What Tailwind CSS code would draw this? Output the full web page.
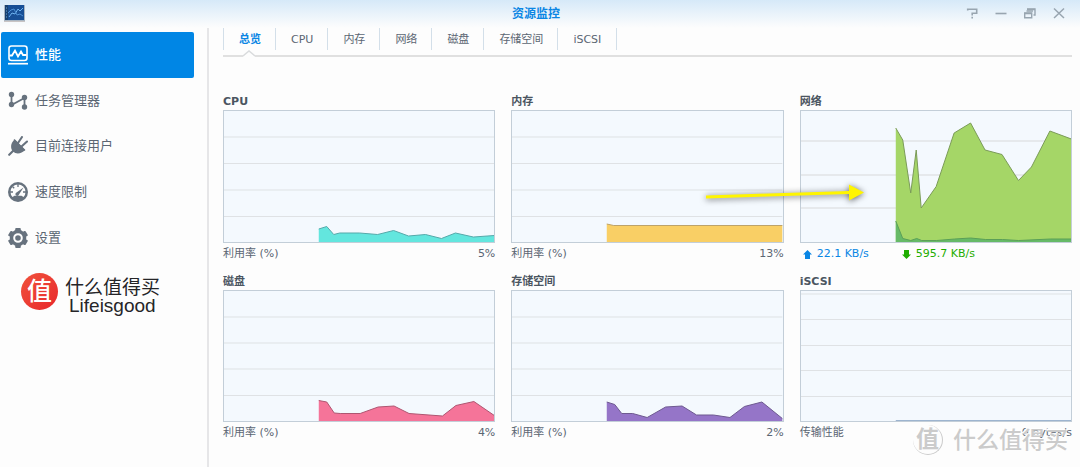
<!DOCTYPE html>
<html lang="zh-CN">
<head>
<meta charset="utf-8">
<title>资源监控</title>
<script src="https://cdn.jsdelivr.net/npm/@tailwindcss/browser@4"></script>
</head>
<body class="relative flex min-h-screen flex-col overflow-x-hidden bg-[#fdfdfd] font-['DejaVu_Sans','Noto_Sans_CJK_SC',sans-serif] text-[11px] leading-4 text-[#5b6673]">

<header class="grid h-7 grid-cols-[1fr_auto_1fr] items-center bg-linear-to-b from-[#d6e9f8] to-[#fdfdfd] pr-3 pl-1">
  <svg class="h-[19px] w-[22px]" viewBox="0 0 22 19" aria-hidden="true">
    <rect x="0" y="0" width="21" height="16" fill="#a9b6c3"/>
    <rect x="1" y="0" width="19" height="15" fill="#174f96"/>
    <path d="M1 0h3v15H1z" fill="#17406f"/>
    <path d="M2 3h1M2 6h1M2 9h1M2 12h1" stroke="#6fa5d8"/>
    <path d="M5 12l3-4 3 1 3-5 2 2 3-3" fill="none" stroke="#6fb4f0"/>
    <path d="M4 8l3-3 3-1 3 6 3-1 3 2" fill="none" stroke="#4d90d6"/>
    <path d="M0 16.500h21" stroke="#c9c4c4"/>
  </svg>
  <h1 class="text-[12px] font-bold text-[#0a86e4]">资源监控</h1>
  <div class="flex justify-end gap-[13px] pb-[3px] text-[#98a5b0]">
    <button type="button" aria-label="帮助" class="h-4 w-4"><svg viewBox="0 0 16 16" fill="none" stroke="currentColor" stroke-width="1.6"><path d="M2.700 5.500V4.200h9v4H7.200v2.300M7.200 11.800v1.700"/></svg></button>
    <button type="button" aria-label="最小化" class="h-4 w-4"><svg viewBox="0 0 16 16" fill="none" stroke="currentColor" stroke-width="1.6"><path d="M1.500 8.500h11"/></svg></button>
    <button type="button" aria-label="还原" class="h-4 w-4"><svg viewBox="0 0 16 16" fill="none" stroke="currentColor" stroke-width="1.4"><path d="M4 4h8v6h-1.500M3.500 6h6.500M1.700 8h7v4.800h-7z"/><path d="M4 4.500h8M1.500 8.500h7.500" stroke-width="1.500"/></svg></button>
    <button type="button" aria-label="关闭" class="h-4 w-4"><svg viewBox="0 0 16 16" fill="none" stroke="currentColor" stroke-width="1.5"><path d="M2 3.500l10 9.500M12 3.500l-10 9.500"/></svg></button>
  </div>
</header>

<div class="flex flex-1">
  <aside class="w-[209px] shrink-0 border-r-2 border-[#e6e6e8] pt-1">
    <nav class="mr-[13px] ml-px grid h-[228px] grid-rows-5 text-[13px]">
      <a href="#performance" aria-current="page" class="flex items-center gap-[7px] rounded-xs bg-[#0086e5] pt-px pl-[7px] text-white">
        <svg class="h-5 w-5" viewBox="0 0 20 20" fill="none" stroke="currentColor" aria-hidden="true"><rect x="1" y="1" width="18" height="14.500" rx="2.500" stroke-width="1.600"/><path d="M1.500 10.500h2.500l3-5 3 6 3-5 2 3.500h3.500" stroke-width="1.800"/><path d="M0 18.700h20" stroke-width="1.700"/></svg>
        <span class="font-medium">性能</span></a>
      <a href="#tasks" class="flex items-center gap-[7px] pt-px pl-[7px]">
        <svg class="h-5 w-5" viewBox="0 0 20 20" fill="#67727e" stroke="#67727e" aria-hidden="true"><path d="M3.500 4v10l13-7v10" fill="none" stroke-width="1.800"/><g stroke="none"><circle cx="3.500" cy="3.500" r="2.700"/><circle cx="3.500" cy="13.500" r="2.700"/><circle cx="16.500" cy="6.500" r="2.700"/><circle cx="16.500" cy="16" r="2.700"/></g></svg>
        <span>任务管理器</span></a>
      <a href="#users" class="flex items-center gap-[7px] pt-px pl-[7px]">
        <svg class="h-5 w-5" viewBox="0 0 20 20" fill="#67727e" stroke="#67727e" stroke-linecap="round" aria-hidden="true"><path d="M6.500 3.500l10.500 10.500c-3.500 4-9 4.500-12 1.500S2.500 7 6.500 3.500z" stroke="none"/><path d="M10 7l4-6M13.500 10.500l5.500-5M1.200 18.800l4-4" stroke-width="2.100"/><path d="M6.500 4l10 10" stroke-width="1.600"/></svg>
        <span>目前连接用户</span></a>
      <a href="#speed" class="flex items-center gap-[7px] pt-px pl-[7px]">
        <svg class="h-5 w-5" viewBox="0 0 20 20" aria-hidden="true"><circle cx="10" cy="10" r="10" fill="#67727e"/><path d="M4.500 15a7.500 7.500 0 1 1 11 0l-2-1.200h-7z" fill="#fdfdfd"/><path d="M10 2v3M4.500 4.500l1.700 1.800M2 10h3M15 10h3" stroke="#67727e" stroke-width="1.300"/><path d="M15.500 5.500l-4.500 7a1.800 1.800 0 1 1-2.500-2z" fill="#67727e"/></svg>
        <span>速度限制</span></a>
      <a href="#settings" class="flex items-center gap-[7px] pt-px pl-[7px]">
        <svg class="h-5 w-5" viewBox="0 0 20 20" aria-hidden="true"><g fill="#67727e"><circle cx="10" cy="10" r="8.300"/><rect x="7.200" y="0" width="5.600" height="20" rx="1"/><rect x="7.200" y="0" width="5.600" height="20" rx="1" transform="rotate(60 10 10)"/><rect x="7.200" y="0" width="5.600" height="20" rx="1" transform="rotate(120 10 10)"/></g><circle cx="10" cy="10" r="3.800" fill="none" stroke="#fdfdfd" stroke-width="2"/></svg>
        <span>设置</span></a>
    </nav>
    <div class="mt-2 flex items-center gap-[7px] pl-[21px] text-[#252528]">
      <span class="flex h-[37px] w-[37px] items-center justify-center rounded-full bg-linear-to-br from-[#f0503c] to-[#e8252b] text-[25px] leading-none font-medium text-white">值</span>
      <div class="flex flex-col pt-[9px]">
        <span class="text-[19px] leading-5">什么值得买</span>
        <span class="pl-1 font-['Liberation_Sans',sans-serif] text-[19px] leading-[18px]">Lifeisgood</span>
      </div>
    </div>
  </aside>

  <main class="min-w-0 flex-1 pr-2 pl-[14px]">
    <div class="relative h-[29px] border-b-2 border-[#e0e0e0]">
      <div role="tablist" class="flex h-[22px] border-l border-[#d3dfe9]">
        <button type="button" role="tab" aria-selected="true" class="border-r border-[#d3dfe9] pt-px pr-[14px] pl-[15px] font-bold text-[#0a86e4]">总览</button>
        <button type="button" role="tab" class="border-r border-[#d3dfe9] pt-px pr-[14px] pl-[15px]">CPU</button>
        <button type="button" role="tab" class="border-r border-[#d3dfe9] pt-px pr-[14px] pl-[15px]">内存</button>
        <button type="button" role="tab" class="border-r border-[#d3dfe9] pt-px pr-[14px] pl-[15px]">网络</button>
        <button type="button" role="tab" class="border-r border-[#d3dfe9] pt-px pr-[14px] pl-[15px]">磁盘</button>
        <button type="button" role="tab" class="border-r border-[#d3dfe9] pt-px pr-[14px] pl-[15px]">存储空间</button>
        <button type="button" role="tab" class="border-r border-[#d3dfe9] px-[15px] pt-px">iSCSI</button>
      </div>
      <svg class="absolute -bottom-[2px] left-5 h-[7px] w-3" viewBox="0 0 12 7" aria-hidden="true"><path d="M0 6.500L6 .8l6 5.700V7H0z" fill="#fdfdfd"/><path d="M0 6L6 1l6 5" fill="none" stroke="#d9dbdd" stroke-width="1.400"/></svg>
    </div>

    <div class="grid grid-cols-3 gap-x-4 gap-y-3 pt-[37px]">
      <section>
        <h2 class="font-bold text-[#4b5561]">CPU</h2>
        <svg class="h-[133px] w-full border border-[#c3ced8] bg-[#f4f9fe]" viewBox="0 0 271 131" preserveAspectRatio="none" role="img" aria-label="CPU">
          <path d="M0 26h271M0 52.500h271M0 79h271M0 105.500h271" stroke="#dfe2e5"/>
          <path d="M95 131V118l8-2.500 7 8 6-1.500h20l18 1.500 16-4 15 5.500 17-1.500 16 4 14-5.500 18 4 21-1.500V131z" fill="#63e6de"/>
          <path d="M95 118l8-2.500 7 8 6-1.500h20l18 1.500 16-4 15 5.500 17-1.500 16 4 14-5.500 18 4 21-1.500" fill="none" stroke="#55a9aa"/>
        </svg>
        <p class="mt-[3px] flex justify-between"><span>利用率 (%)</span><span>5%</span></p>
      </section>

      <section>
        <h2 class="font-bold text-[#4b5561]">内存</h2>
        <svg class="h-[133px] w-full border border-[#c3ced8] bg-[#f4f9fe]" viewBox="0 0 271 131" preserveAspectRatio="none" role="img" aria-label="内存">
          <path d="M0 26h271M0 52.500h271M0 79h271M0 105.500h271" stroke="#dfe2e5"/>
          <path d="M95 131V113l7 1.500h169V131z" fill="#f9cf65"/>
          <path d="M95 113l7 1.500h169" fill="none" stroke="#bda369"/>
        </svg>
        <p class="mt-[3px] flex justify-between"><span>利用率 (%)</span><span>13%</span></p>
      </section>

      <section>
        <h2 class="font-bold text-[#4b5561]">网络</h2>
        <div class="relative">
          <svg class="h-[133px] w-full border border-[#c3ced8] bg-[#f4f9fe]" viewBox="0 0 271 131" preserveAspectRatio="none" role="img" aria-label="网络">
            <path d="M0 30h271M0 64h271M0 97h271" stroke="#e1e4e6" stroke-width="1.500"/>
            <path d="M95 131V17l7 12 8 53 5.500-43 5 58 15-21.500 18-53.500 16.500-10 14.500 27 17 4.500 16.500 26L231 56l18.500-36 21.500 8V131z" fill="#a5d667"/>
            <path d="M95 17l7 12 8 53 5.500-43 5 58 15-21.500 18-53.500 16.500-10 14.500 27 17 4.500 16.500 26L231 56l18.500-36 21.500 8" fill="none" stroke="#7a9b58"/>
            <path d="M95 131V110l7 17.500 8 2 6-2 5 2h15l18-1.500 16-1 15 1.500h17l16 1 32-1.500h21V131z" fill="#66ba67"/>
            <path d="M95 110l7 17.500 8 2 6-2 5 2h15l18-1.500 16-1 15 1.500h17l16 1 32-1.500h21" fill="none" stroke="#5a9f57"/>
          </svg>
          <svg class="pointer-events-none absolute top-[71px] -left-[98px] h-7 w-[168px] drop-shadow-[0_1px_3px_rgb(0_0_0/0.65)]" viewBox="0 0 168 28" aria-hidden="true"><path d="M4 14.500L147 10V3.500L162 11.500 147 19.500V13L4 17.500z" fill="#fff500"/></svg>
        </div>
        <p class="mt-[3px] flex gap-[33px] pl-[3px]">
          <span class="flex items-center gap-[5px] text-[#0a86e4]"><svg class="h-[9px] w-[9px]" viewBox="0 0 9 9" fill="currentColor" aria-hidden="true"><path d="M4.500 0L9 4.500H7V9H2V4.500H0z"/></svg>22.1 KB/s</span>
          <span class="flex items-center gap-[5px] text-[#1fad00]"><svg class="h-[9px] w-[9px]" viewBox="0 0 9 9" fill="currentColor" aria-hidden="true"><path d="M4.500 9L9 4.500H7V0H2v4.500H0z"/></svg>595.7 KB/s</span>
        </p>
      </section>

      <section>
        <h2 class="font-bold text-[#4b5561]">磁盘</h2>
        <svg class="h-[132px] w-full border border-[#c3ced8] bg-[#f4f9fe]" viewBox="0 0 271 130" preserveAspectRatio="none" role="img" aria-label="磁盘">
          <path d="M0 26h271M0 52h271M0 78h271M0 104.500h271" stroke="#dfe2e5"/>
          <path d="M95 130V109.500l8 1.500 7.500 11 6 .5h20l18-6.500 16-1 15 7.500 33.500 2.500 13.500-10.500 18-4 20.500 14V130z" fill="#f57499"/>
          <path d="M95 109.500l8 1.500 7.500 11 6 .5h20l18-6.500 16-1 15 7.500 33.500 2.500 13.500-10.500 18-4 20.500 14" fill="none" stroke="#ae5570"/>
        </svg>
        <p class="mt-[3px] flex justify-between"><span>利用率 (%)</span><span>4%</span></p>
      </section>

      <section>
        <h2 class="font-bold text-[#4b5561]">存储空间</h2>
        <svg class="h-[132px] w-full border border-[#c3ced8] bg-[#f4f9fe]" viewBox="0 0 271 130" preserveAspectRatio="none" role="img" aria-label="存储空间">
          <path d="M0 26h271M0 52h271M0 78h271M0 104.500h271" stroke="#dfe2e5"/>
          <path d="M95 130V111l8 2.500 7 9h11l14.500 4 18.500-10.500 16.500-1 14.500 9h17l16.500 2.500L233 115.500l17.500-4.500 20.500 16.500V130z" fill="#9575c8"/>
          <path d="M95 111l8 2.500 7 9h11l14.500 4 18.500-10.500 16.500-1 14.500 9h17l16.500 2.500L233 115.500l17.500-4.500 20.500 16.500" fill="none" stroke="#6d5990"/>
        </svg>
        <p class="mt-[3px] flex justify-between"><span>利用率 (%)</span><span>2%</span></p>
      </section>

      <section>
        <h2 class="font-bold text-[#4b5561]">iSCSI</h2>
        <svg class="h-[132px] w-full border border-[#c3ced8] bg-[#f4f9fe]" viewBox="0 0 271 130" preserveAspectRatio="none" role="img" aria-label="iSCSI">
          <path d="M0 3h271M0 28.500h271M0 54.500h271M0 79.500h271M0 105.500h271" stroke="#dfe2e5"/>
          <path d="M95 129.500h176" stroke="#9db4cf"/>
        </svg>
        <p class="mt-[3px] flex justify-between"><span>传输性能</span><span>0 bytes/s</span></p>
      </section>
    </div>
  </main>
</div>

<div class="pointer-events-none absolute right-3 bottom-3 flex items-center gap-[10px] text-[#cbcbcb] [text-shadow:-1px_-1px_0_#fff]" aria-hidden="true">
  <span class="flex h-[30px] w-[30px] items-center justify-center rounded-full border-r border-b border-[#cbcbcb] text-[23px] leading-none font-bold">值</span>
  <span class="text-[23px] leading-7 font-medium">什么值得买</span>
</div>

</body>
</html>
